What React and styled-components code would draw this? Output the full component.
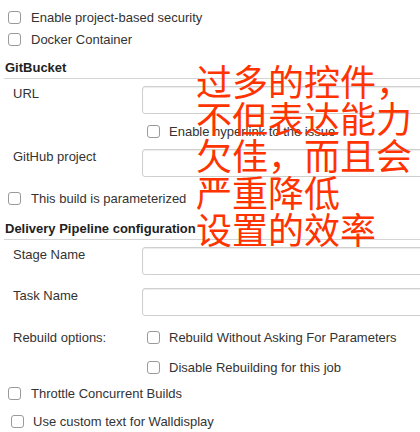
import React from "react";
import styled, { createGlobalStyle } from "styled-components";

const Global = createGlobalStyle`
  html, body { margin: 0; padding: 0; background: #fff; }
  body { font-family: "Liberation Sans", Arial, sans-serif; font-size: 13px; color: #333; }
`;

const Page = styled.div`
  position: relative;
  width: 420px;
  height: 432px;
  overflow: hidden;
  padding-top: 6px;
  box-sizing: border-box;
`;

const CheckRow = styled.label`
  display: flex;
  align-items: center;
  height: 22px;
  margin-top: ${p => p.$mt || 0}px;
  padding-left: ${p => p.$indent ?? 8}px;
  gap: ${p => p.$gap ?? 10}px;
  line-height: 15px;
  white-space: nowrap;
`;

const Box = styled.input.attrs({ type: "checkbox" })`
  appearance: none;
  -webkit-appearance: none;
  margin: 0;
  width: 13px;
  height: 13px;
  box-sizing: border-box;
  border: 1px solid #9a9a9a;
  border-radius: 3px;
  background: #fff;
  flex: none;
`;

const SectionHeader = styled.div`
  margin-top: ${p => p.$mt || 0}px;
  margin-left: 4px;
  height: 22px;
  padding-left: 1px;
  display: flex;
  align-items: center;
  font-weight: bold;
  color: #222;
  border-bottom: 1px solid #d5d5d5;
  white-space: nowrap;
`;

const FormRow = styled.div`
  display: flex;
  align-items: flex-start;
  margin-top: ${p => p.$mt || 0}px;
`;

const Label = styled.div`
  width: 129px;
  padding-left: 13px;
  flex: none;
  line-height: 15px;
  padding-top: ${p => p.$pt ?? 0}px;
  white-space: nowrap;
`;

const Field = styled.div`
  flex: 1;
  min-width: 0;
  display: flex;
  flex-direction: column;
`;

const TextInput = styled.div`
  height: 28px;
  width: 300px;
  box-sizing: border-box;
  border: 1px solid #cfcfcf;
  border-radius: 3px;
  box-shadow: inset 0 1px 1px rgba(0, 0, 0, 0.08);
  background: #fff;
`;

const Overlay = styled.div`
  position: absolute;
  left: 196px;
  top: 62px;
  font-family: "Noto Sans CJK SC", "Noto Sans CJK JP", sans-serif;
  font-weight: 400;
  font-size: 36px;
  line-height: 37px;
  color: #ff3300;
  white-space: pre;
  pointer-events: none;
`;

export default function App() {
  return (
    <>
      <Global />
      <Page>
        <CheckRow><Box />Enable project-based security</CheckRow>
        <CheckRow><Box />Docker Container</CheckRow>
        <SectionHeader $mt={6}>GitBucket</SectionHeader>
        <FormRow $mt={7}>
          <Label>URL</Label>
          <Field>
            <TextInput />
          </Field>
        </FormRow>
        <CheckRow $mt={6} $indent={147} $gap={9}><Box />Enable hyperlink to the issue</CheckRow>
        <FormRow $mt={7}>
          <Label>GitHub project</Label>
          <Field>
            <TextInput />
          </Field>
        </FormRow>
        <CheckRow $mt={10}><Box />This build is parameterized</CheckRow>
        <SectionHeader $mt={8}>Delivery Pipeline configuration</SectionHeader>
        <FormRow $mt={7}>
          <Label>Stage Name</Label>
          <Field>
            <TextInput />
          </Field>
        </FormRow>
        <FormRow $mt={13}>
          <Label>Task Name</Label>
          <Field>
            <TextInput />
          </Field>
        </FormRow>
        <FormRow $mt={10}>
          <Label $pt={4}>Rebuild options:</Label>
          <Field>
            <CheckRow $indent={5} $gap={9}><Box />Rebuild Without Asking For Parameters</CheckRow>
            <CheckRow $mt={8} $indent={5} $gap={9}><Box />Disable Rebuilding for this job</CheckRow>
          </Field>
        </FormRow>
        <CheckRow $mt={4}><Box />Throttle Concurrent Builds</CheckRow>
        <CheckRow $mt={6} $indent={11} $gap={9}><Box />Use custom text for Walldisplay</CheckRow>
        <Overlay>{"过多的控件，\n不但表达能力\n欠佳，而且会\n严重降低\n设置的效率"}</Overlay>
      </Page>
    </>
  );
}
